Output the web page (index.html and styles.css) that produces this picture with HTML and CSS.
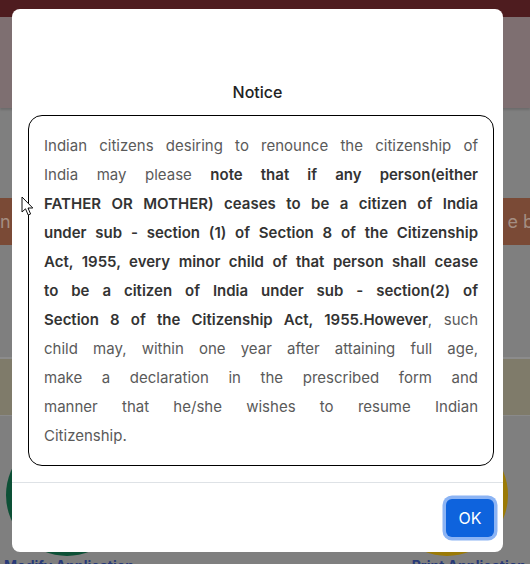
FILE: index.html
```html
<!DOCTYPE html>
<html>
<head>
<meta charset="utf-8">
<link rel="stylesheet" href="styles.css">
</head>
<body>
<div class="page">
  <div class="topbar"></div>
  <div class="hero"></div>
  <div class="band"><span>n</span><span>e b</span></div>
  <div class="olive"></div>
  <div class="circles"><div class="circle green"></div><div class="circle yellow"></div></div>
  <div class="labels"><span>Modify Application</span><span>Print Application</span></div>
</div>

<div class="modal">
  <div class="modal-header"><h5 class="title">Notice</h5></div>
  <div class="modal-body">
    <div class="notice">
      <span class="line">Indian citizens desiring to renounce the citizenship of</span>
      <span class="line">India may please <b>note that if any person(either</b></span>
      <span class="line"><b>FATHER OR MOTHER) ceases to be a citizen of India</b></span>
      <span class="line"><b>under sub - section (1) of Section 8 of the Citizenship</b></span>
      <span class="line"><b>Act, 1955, every minor child of that person shall cease</b></span>
      <span class="line"><b>to be a citizen of India under sub - section(2) of</b></span>
      <span class="line"><b>Section 8 of the Citizenship Act, 1955.However</b>, such</span>
      <span class="line">child may, within one year after attaining full age,</span>
      <span class="line">make a declaration in the prescribed form and</span>
      <span class="line">manner that he/she wishes to resume Indian</span>
      <span class="line last">Citizenship.</span>
    </div>
  </div>
  <div class="modal-footer"><button class="ok">OK</button></div>
</div>

<svg class="cursor" width="14" height="21" viewBox="0 0 14 21"><path d="M1 1 L1 16 L4.5 12.8 L7.2 19 L9.6 18 L7 12 L11.8 12 Z" fill="#fff" stroke="#111" stroke-width="1" stroke-linejoin="round"/></svg>
</body>
</html>
```
FILE: styles.css
```css
html, body { margin: 0; padding: 0; }
body {
  width: 530px; height: 564px; overflow: hidden;
  background: #7f7f7f;
  font-family: "Inter", "Noto Sans", sans-serif;
  position: relative;
}
.page { display: flex; flex-direction: column; }
.topbar { height: 17px; background: #4e1c1f; }
.hero { height: 91px; background: #7e6f71; box-shadow: 0 2px 2px rgba(0,0,0,0.15); }
.band {
  margin-top: 90px; height: 47px; background: #7a4a36;
  display: flex; justify-content: space-between; align-items: center;
  color: #a48e82; font-size: 18px; line-height: 1;
}
.band span:last-child { margin-right: -4px; }
.olive {
  margin-top: 112px; height: 56px; background: #7f7b6a;
  border-top: 2px solid #8c8c8c; border-bottom: 1px solid #8a8a8a;
}
.circles { margin-top: 18px; display: flex; justify-content: space-between; padding: 0 22px 0 6px; }
.circle { width: 122px; height: 122px; border-radius: 50%; }
.green { background: #0d5036; }
.yellow { background: #9b7a06; }
.labels {
  display: flex; justify-content: space-between; padding: 0 4px 0 4px;
  margin-top: 2px;
  font-size: 14px; font-weight: 700; color: #283a78; line-height: 16px;
}

.modal {
  position: absolute; left: 12px; top: 9px; width: 491px; height: 543px;
  background: #fff; border-radius: 8px;
  display: flex; flex-direction: column;
}
.modal-header { padding-top: 71px; height: 35px; box-sizing: content-box; }
.title {
  margin: 0; text-align: center; font-size: 16px; font-weight: 500;
  line-height: 24px; color: #222;
}
.modal-body { padding: 0 9px 0 16px; }
.notice {
  border: 1px solid #000; border-radius: 14px;
  padding: 15px;
  font-size: 15px; line-height: 29px; color: #5a5a5a;
}
.line { display: block; white-space: nowrap; text-align: justify; text-align-last: justify; }
.line.last { text-align-last: left; }
.notice b { font-weight: 600; color: #333; }
.modal-footer {
  margin-top: 16px; border-top: 1px solid #dee2e6;
  display: flex; justify-content: flex-end; padding: 16px 9px 0 0;
}
.ok {
  width: 48px; height: 38px; border: none; border-radius: 6px;
  background: #0e63dd; color: #fff; font-family: inherit; font-size: 16px;
  box-shadow: 0 0 0 3.5px #8cb4f4;
}
.cursor { position: absolute; left: 21px; top: 196px; }
```
